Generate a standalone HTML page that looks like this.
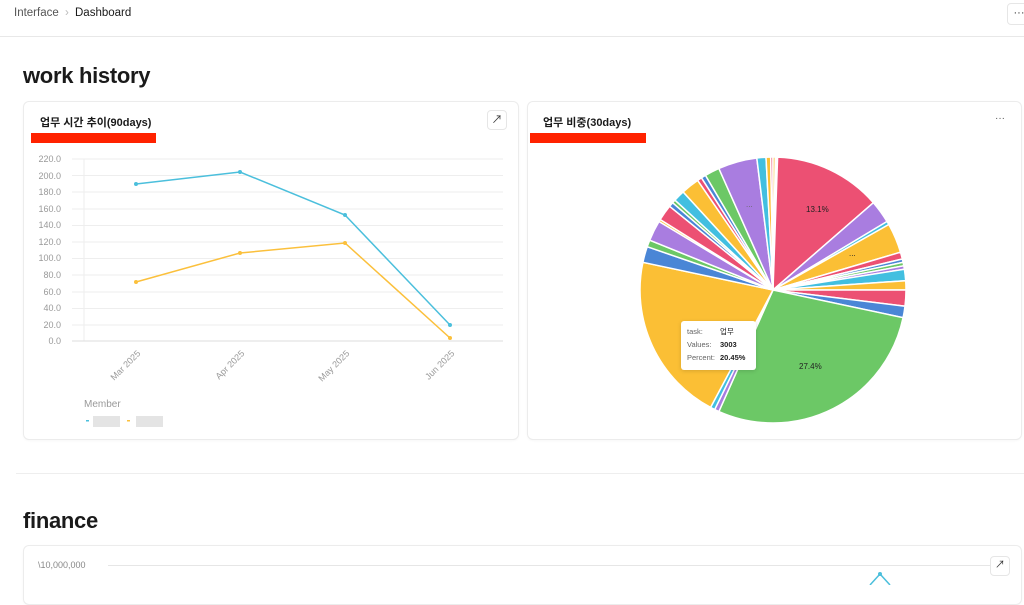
<!DOCTYPE html>
<html><head><meta charset="utf-8"><style>
*{margin:0;padding:0;box-sizing:border-box}
body{width:1024px;height:585px;overflow:hidden;background:#fff;font-family:"Liberation Sans","Noto Sans CJK KR",sans-serif;color:#1a1a1a;position:relative}
.a{position:absolute}
.card{position:absolute;border:1px solid #ececec;border-radius:6px;background:#fff;box-shadow:0 1px 2px rgba(0,0,0,.03)}
.btn{position:absolute;border:1px solid #e6e6e6;border-radius:4px;background:#fff;font-size:11px;text-align:center;color:#333}
h2{position:absolute;font-size:22px;font-weight:bold;letter-spacing:-.3px}
</style></head><body>
<div class="a" style="left:0;top:0;width:1024px;height:37px;border-bottom:1px solid #e8e8e8"></div>
<div class="a" style="left:14px;top:7px;font-size:11.5px;color:#555">Interface <span style="color:#bbb;margin:0 3px">›</span> <span style="color:#1a1a1a">Dashboard</span></div>
<div class="btn" style="left:1007px;top:3px;width:24px;height:22px;line-height:18px">···</div>
<h2 style="left:23px;top:63px">work history</h2>

<div class="card" style="left:23px;top:101px;width:496px;height:339px"></div>
<div class="a" style="left:40px;top:114px;font-size:11px;font-weight:bold">업무 시간 추이(90days)</div>
<div class="a" style="left:31px;top:133px;width:125px;height:10px;background:#ff2200"></div>
<div class="btn" style="left:487px;top:110px;width:20px;height:20px;line-height:18px">↗</div>

<svg class="a" style="left:0;top:0" width="520" height="440">
<g stroke="#eeeeee" stroke-width="1">
<line x1="72" y1="159" x2="503" y2="159"/><line x1="72" y1="175.5" x2="503" y2="175.5"/><line x1="72" y1="192" x2="503" y2="192"/><line x1="72" y1="209" x2="503" y2="209"/><line x1="72" y1="225.5" x2="503" y2="225.5"/><line x1="72" y1="242" x2="503" y2="242"/><line x1="72" y1="258.5" x2="503" y2="258.5"/><line x1="72" y1="275" x2="503" y2="275"/><line x1="72" y1="292" x2="503" y2="292"/><line x1="72" y1="308.5" x2="503" y2="308.5"/><line x1="72" y1="325" x2="503" y2="325"/><line x1="84" y1="159" x2="84" y2="341"/>
</g>
<line x1="72" y1="341" x2="503" y2="341" stroke="#ddd"/>
<g font-size="9" fill="#999" text-anchor="end" font-family="Liberation Sans">
<text x="61" y="162">220.0</text><text x="61" y="179">200.0</text><text x="61" y="195">180.0</text><text x="61" y="212">160.0</text><text x="61" y="228">140.0</text><text x="61" y="245">120.0</text><text x="61" y="261">100.0</text><text x="61" y="278">80.0</text><text x="61" y="295">60.0</text><text x="61" y="311">40.0</text><text x="61" y="328">20.0</text><text x="61" y="344">0.0</text>
<text transform="translate(141,354) rotate(-45)">Mar 2025</text>
<text transform="translate(245,354) rotate(-45)">Apr 2025</text>
<text transform="translate(350,354) rotate(-45)">May 2025</text>
<text transform="translate(455,354) rotate(-45)">Jun 2025</text>
</g>
<polyline points="136,184 240,172 345,215 450,325" fill="none" stroke="#4bbfdc" stroke-width="1.5"/>
<polyline points="136,282 240,253 345,243 450,338" fill="none" stroke="#fbc03c" stroke-width="1.5"/>
<g fill="#4bbfdc"><circle cx="136" cy="184" r="2"/><circle cx="240" cy="172" r="2"/><circle cx="345" cy="215" r="2"/><circle cx="450" cy="325" r="2"/></g>
<g fill="#fbc03c"><circle cx="136" cy="282" r="2"/><circle cx="240" cy="253" r="2"/><circle cx="345" cy="243" r="2"/><circle cx="450" cy="338" r="2"/></g>
<text x="84" y="407" font-size="10" fill="#999" font-family="Liberation Sans">Member</text>
<rect x="86" y="420" width="3" height="1.5" fill="#4bbfdc"/><rect x="93" y="416" width="27" height="11" fill="#e4e4e4"/>
<rect x="127" y="420" width="3" height="1.5" fill="#fbc03c"/><rect x="136" y="416" width="27" height="11" fill="#e4e4e4"/>
</svg>

<div class="card" style="left:527px;top:101px;width:495px;height:339px"></div>
<div class="a" style="left:543px;top:114px;font-size:11px;font-weight:bold">업무 비중(30days)</div>
<div class="a" style="left:530px;top:133px;width:116px;height:10px;background:#ff2200"></div>
<div class="a" style="left:995px;top:113px;font-size:10px;color:#555">···</div>
<svg id="pie" class="a" style="left:0;top:0" width="1024" height="470"></svg>
<div class="a" style="left:806px;top:205px;font-size:8px;color:#222">13.1%</div>
<div class="a" style="left:799px;top:362px;font-size:8px;color:#222">27.4%</div>
<div class="a" style="left:849px;top:249px;font-size:8px;color:#222">...</div>
<div class="a" style="left:746px;top:200px;font-size:8px;color:#666">...</div>
<div class="a" style="left:681px;top:321px;width:75px;height:49px;background:#fff;border-radius:3px;box-shadow:0 1px 4px rgba(0,0,0,.15);font-size:7.5px;line-height:13px;padding:4px 6px;color:#666">
<div>task:<span style="position:absolute;left:39px;color:#222">업무</span></div>
<div>Values:<span style="position:absolute;left:39px;color:#222;font-weight:bold">3003</span></div>
<div>Percent:<span style="position:absolute;left:39px;color:#222;font-weight:bold">20.45%</span></div>
</div>

<div class="a" style="left:16px;top:473px;width:1008px;height:1px;background:#eee"></div>
<h2 style="left:23px;top:508px">finance</h2>
<div class="card" style="left:23px;top:545px;width:999px;height:60px"></div>
<div class="a" style="left:38px;top:560px;font-size:9px;color:#888">\10,000,000</div>
<div class="a" style="left:108px;top:565px;width:890px;height:1px;background:#e6e6e6"></div>
<div class="btn" style="left:990px;top:556px;width:20px;height:20px;line-height:18px;font-size:10px">↗</div>
<svg class="a" style="left:860px;top:570px" width="40" height="15"><polyline points="10,15 20,4 30,15" fill="none" stroke="#4bbfdc" stroke-width="1.5"/><circle cx="20" cy="4" r="2" fill="#4bbfdc"/></svg>

<script>
var R='#ec5073',P='#a97de0',C='#42bfe0',Y='#fbbf35',B='#4a86d6',G='#6cc866';
var s=[[R,47],[P,10],[C,1.5],[Y,13],[R,3],[B,1.5],[G,1.5],[P,1.5],[C,5],[Y,4],[R,7],[B,5],[G,102],[P,2],[C,2],[Y,74],[B,7],[G,3],[P,9],[Y,1],[R,7],[B,2],[G,1.5],[C,5],[Y,8],[R,2],[B,2],[G,6.5],[P,17],[C,4],[Y,2],[R,1],[Y,1]];
var cx=773,cy=290,r=133,a=2,h='';
function pt(d){var t=(d-90)*Math.PI/180;return (cx+r*Math.cos(t)).toFixed(1)+','+(cy+r*Math.sin(t)).toFixed(1);}
s.forEach(function(x){var b=a+x[1];h+='<path d="M'+cx+','+cy+' L'+pt(a)+' A'+r+','+r+' 0 '+(x[1]>180?1:0)+' 1 '+pt(b)+' Z" fill="'+x[0]+'" stroke="#fff" stroke-width="1.5"/>';a=b;});
document.getElementById('pie').innerHTML=h;
</script>
</body></html>
